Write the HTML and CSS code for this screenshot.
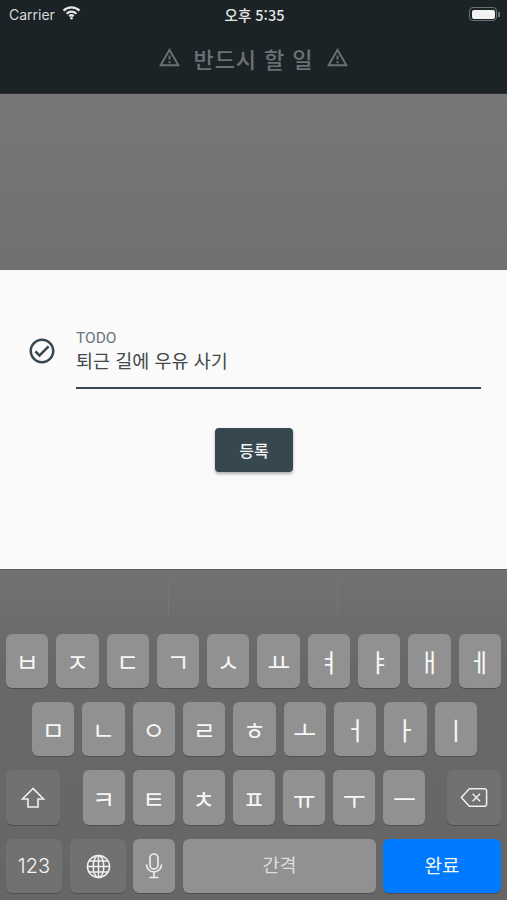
FILE: index.html
```html
<!DOCTYPE html>
<html lang="ko">
<head>
	<meta charset="utf-8">
	<title>반드시 할 일</title>
	<link rel="stylesheet" href="styles.css">
</head>
<body>
  <header class="appbar">
    <div class="status">
      <div class="status-left">
        <span>Carrier</span>
        <svg class="wifi" width="19" height="15" viewBox="0 0 19 15"><path d="M1.5 5.6a11.4 11.4 0 0 1 16 0" /><path d="M4.6 8.7a7 7 0 0 1 9.8 0" /><path d="M7.3 11.3a3.2 3.2 0 0 1 4.4 0" /><circle cx="9.5" cy="13.3" r="1.3" /></svg>
      </div>
      <div class="status-time">오후 5:35</div>
      <div class="status-right">
        <span class="battery"><span class="battery-fill"></span></span>
        <span class="battery-tip"></span>
      </div>
    </div>
    <div class="title-row">
      <svg class="warn" viewBox="0 0 24 24"><path d="M12 5.99L19.53 19H4.47L12 5.99M12 2L1 21h22L12 2zm1 14h-2v2h2v-2zm0-6h-2v4h2v-4z"/></svg>
      <h1>반드시 할 일</h1>
      <svg class="warn" viewBox="0 0 24 24"><path d="M12 5.99L19.53 19H4.47L12 5.99M12 2L1 21h22L12 2zm1 14h-2v2h2v-2zm0-6h-2v4h2v-4z"/></svg>
    </div>
  </header>

  <div class="scrim"></div>

  <main class="sheet">
    <div class="field-row">
      <svg class="check" viewBox="0 0 24 24"><path d="M12 2C6.48 2 2 6.48 2 12s4.48 10 10 10 10-4.48 10-10S17.52 2 12 2zm0 18c-4.41 0-8-3.59-8-8s3.59-8 8-8 8 3.59 8 8-3.59 8-8 8zm4.59-12.42L10 14.17l-2.59-2.58L6 13l4 4 8-8z"/></svg>
      <div class="field">
        <label>TODO</label>
        <div class="value">퇴근 길에 우유 사기</div>
      </div>
    </div>
    <button class="submit">등록</button>
  </main>

  <section class="keyboard">
    <div class="suggest">
      <span class="suggest-cell"></span>
      <span class="suggest-cell"></span>
      <span class="suggest-cell"></span>
    </div>
    <div class="keys">
      <div class="row row1">
        <span class="key">ㅂ</span><span class="key">ㅈ</span><span class="key">ㄷ</span><span class="key">ㄱ</span><span class="key">ㅅ</span><span class="key">ㅛ</span><span class="key">ㅕ</span><span class="key">ㅑ</span><span class="key">ㅐ</span><span class="key">ㅔ</span>
      </div>
      <div class="row row2">
        <span class="key">ㅁ</span><span class="key">ㄴ</span><span class="key">ㅇ</span><span class="key">ㄹ</span><span class="key">ㅎ</span><span class="key">ㅗ</span><span class="key">ㅓ</span><span class="key">ㅏ</span><span class="key">ㅣ</span>
      </div>
      <div class="row row3">
        <span class="key dark side">
          <svg width="26" height="24" viewBox="0 0 26 24"><path class="line" d="M13 2.5L2.5 13H8v8h10v-8h5.5z"/></svg>
        </span>
        <div class="letters">
          <span class="key">ㅋ</span><span class="key">ㅌ</span><span class="key">ㅊ</span><span class="key">ㅍ</span><span class="key">ㅠ</span><span class="key">ㅜ</span><span class="key">ㅡ</span>
        </div>
        <span class="key dark side">
          <svg width="28" height="21" viewBox="0 0 30 22"><path class="line" d="M10 1.5h16a2.5 2.5 0 0 1 2.5 2.5v14a2.5 2.5 0 0 1-2.5 2.5H10L1.5 11z"/><path class="line" d="M13.5 7l8 8M21.5 7l-8 8"/></svg>
        </span>
      </div>
      <div class="row row4">
        <span class="key dark num">123</span>
        <span class="key dark globe">
          <svg width="25" height="25" viewBox="0 0 26 26"><g class="line"><circle cx="13" cy="13" r="11.5"/><ellipse cx="13" cy="13" rx="5.5" ry="11.5"/><path d="M13 1.5v23M1.5 13h23M3.2 7.2h19.6M3.2 18.8h19.6"/></g></svg>
        </span>
        <span class="key mic">
          <svg width="18" height="26" viewBox="0 0 18 26"><g class="line"><rect x="5" y="1" width="8" height="15" rx="4"/><path d="M1.5 11.5a7.5 7.5 0 0 0 15 0M9 19v5M4.5 24.5h9"/></g></svg>
        </span>
        <span class="key space">간격</span>
        <span class="key done">완료</span>
      </div>
    </div>
  </section>
</body>
</html>
```

FILE: styles.css
```css
* {
	box-sizing: border-box;
}
html, body {
	height: 100%;
}
body {
	margin: 0;
	padding: 0;
	display: flex;
	flex-direction: column;
	height: 900px;
	overflow: hidden;
	font-family: "Noto Sans CJK KR", "Noto Sans", sans-serif;
	background: #6b6b6b;
}

.appbar {
	height: 94px;
	background: #1b2326;
	border-bottom: 1px solid #2a3033;
}
.status {
	height: 28px;
	padding: 0 7px 0 9px;
	display: flex;
	align-items: center;
	justify-content: space-between;
	color: #d6d8d8;
	font-size: 14.5px;
}
.status-left {
	display: flex;
	align-items: center;
	gap: 7px;
	width: 120px;
	font-family: Inter, "Noto Sans", sans-serif;
	font-size: 14px;
}
.wifi {
	margin-top: -3px;
}
.wifi path {
	fill: none;
	stroke: #e4e6e6;
	stroke-width: 2.2;
}
.wifi circle {
	fill: #e4e6e6;
}
.status-time {
	font-weight: 500;
	color: #e6e7e7;
}
.status-right {
	width: 120px;
	display: flex;
	align-items: center;
	justify-content: flex-end;
}
.battery {
	width: 28px;
	height: 14px;
	border: 1.5px solid #6d7274;
	border-radius: 4px;
	padding: 1.5px;
	display: flex;
}
.battery-fill {
	flex: 1;
	background: #f2f2f2;
	border-radius: 2px;
}
.battery-tip {
	width: 2px;
	height: 5px;
	margin-left: 1px;
	background: #6d7274;
}
.title-row {
	height: 62px;
	display: flex;
	align-items: center;
	justify-content: center;
	gap: 13px;
	padding-bottom: 3px;
}
.title-row h1 {
	margin: 0;
	font-size: 22px;
	font-weight: 500;
	letter-spacing: 0.9px;
	color: #6c7173;
}
.warn {
	width: 23px;
	height: 23px;
	fill: #6c7173;
}

.scrim {
	height: 176px;
	background: linear-gradient(#777777, #707070);
}

.sheet {
	height: 299px;
	background: #fafafa;
	padding: 60px 26px 0 27px;
}
.field-row {
	display: flex;
	align-items: flex-start;
	gap: 19px;
}
.check {
	width: 30px;
	height: 30px;
	margin-top: 6px;
	fill: #37474f;
}
.field {
	flex: 1;
	height: 59px;
	border-bottom: 2px solid #37474f;
}
.field label {
	display: block;
	font-family: Roboto, sans-serif;
	font-size: 15.5px;
	line-height: 16px;
	color: #6b757a;
}
.value {
	margin-top: 1px;
	font-size: 18.5px;
	line-height: 26px;
	color: #43484b;
}
.submit {
	display: block;
	width: 78px;
	height: 44px;
	margin: 39px auto 0;
	border: 0;
	border-radius: 4px;
	background: #37474f;
	color: #f5f6f6;
	font-family: inherit;
	font-size: 16px;
	font-weight: 500;
	box-shadow: 0 2px 3px rgba(0, 0, 0, .3);
}

.keyboard {
	flex: 1;
	background: linear-gradient(#727272, #686868 30%, #666666);
	border-top: 1px solid #5e5e5e;
}
.suggest {
	height: 64px;
	padding-top: 12px;
	display: flex;
}
.suggest-cell {
	width: 169px;
	height: 33px;
	border-right: 1px solid #767676;
}
.suggest-cell:last-child {
	border-right: 0;
}
.keys {
	display: flex;
	flex-direction: column;
	gap: 14px;
}
.row {
	height: 54px;
	display: flex;
	gap: 8px;
	padding: 0 6px;
}
.row2 {
	padding: 0 30px 0 32px;
}
.row3 {
	height: 55px;
	justify-content: space-between;
}
.letters {
	width: 343px;
	margin-right: -1px;
	display: flex;
	gap: 8px;
}
.key {
	flex: 1;
	display: flex;
	align-items: center;
	justify-content: center;
	background: #919191;
	border-radius: 6px;
	box-shadow: 0 1px 0 #505050;
	color: #f6f6f6;
	font-size: 25px;
}
.dark {
	background: #717171;
}
.side {
	flex: none;
	width: 54px;
}
.line {
	fill: none;
	stroke: #f0f0f0;
	stroke-width: 1.6;
}
.num {
	flex: none;
	width: 56px;
	font-family: Inter, "Noto Sans", sans-serif;
	font-size: 20px;
	font-weight: 300;
}
.globe {
	flex: none;
	width: 56px;
}
.mic {
	flex: none;
	width: 42px;
	margin-left: -1px;
}
.space {
	flex: none;
	width: 193px;
	padding-bottom: 4px;
	font-size: 18.5px;
	color: #dedede;
}
.done {
	flex: none;
	width: 118px;
	margin-left: -1px;
	padding-bottom: 4px;
	background: #007aff;
	font-size: 19px;
}
```
